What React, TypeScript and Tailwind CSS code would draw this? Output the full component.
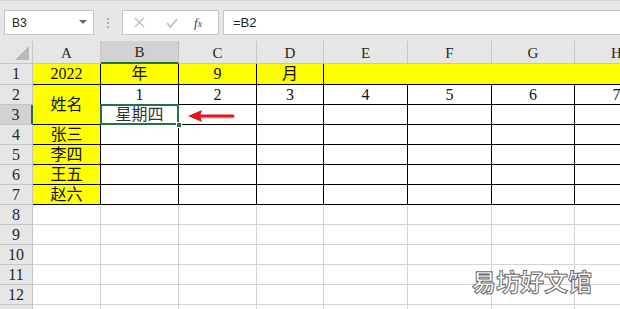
import React from "react";

const serif = { fontFamily: '"Liberation Serif", "Noto Sans CJK SC", serif' };

const cols = ["A", "B", "C", "D", "E", "F", "G", "H"];

function ColHeader({ l }: { l: string }) {
  if (l === "B") {
    return (
      <div className="flex items-center justify-center border-r border-[#bdbdbd] border-b-2 border-b-[#217346] bg-[#d2d2d2] text-[15px] text-[#262626] pt-[2px]">
        {l}
      </div>
    );
  }
  return (
    <div className="flex items-center justify-center border-r border-b border-[#c6c6c6] bg-[#e6e6e6] text-[15px] text-[#262626] pt-[2px]">
      {l}
    </div>
  );
}

function RowHeader({ n }: { n?: number }) {
  if (n === 3) {
    return (
      <div className="flex items-center justify-center border-b border-[#c6c6c6] border-r-2 border-r-[#217346] bg-[#d2d2d2] text-[16px] text-[#262626]">
        {n}
      </div>
    );
  }
  return (
    <div className="flex items-center justify-center border-r border-b border-[#c6c6c6] bg-[#e6e6e6] text-[16px] text-[#262626]">
      {n}
    </div>
  );
}

function Y({ children, className = "" }: { children?: React.ReactNode; className?: string }) {
  return (
    <div className={"flex items-center justify-center border-r border-b border-black bg-[#ffff00] text-[16px] text-[#111] " + className}>
      {children}
    </div>
  );
}

function W({ children }: { children?: React.ReactNode }) {
  return (
    <div className="flex items-center justify-center border-r border-b border-black bg-white text-[16px] text-[#111]">
      {children}
    </div>
  );
}

function L() {
  return <div className="border-r border-b border-[#d4d4d4] bg-white" />;
}

export default function App() {
  const names = ["张三", "李四", "王五", "赵六"];
  return (
    <div className="relative w-[620px] h-[309px] overflow-hidden bg-[#e6e6e6]">
      {/* toolbar */}
      <div className="h-[41px] border-t border-[#d4d4d4] bg-[#e6e6e6]">
        <div className="flex items-stretch h-[25px] mt-[9px]">
          <div
            className="ml-[4px] w-[90px] flex items-center justify-between border border-[#c6c6c6] bg-white pl-[7px] pr-[6px] text-[12px] text-[#222]"
            style={{ fontFamily: '"Liberation Sans", Arial, sans-serif' }}
          >
            <span>B3</span>
            <svg width="8" height="5" viewBox="0 0 8 5">
              <path d="M0 0 L8 0 L4 4 Z" fill="#6a6a6a" />
            </svg>
          </div>
          <div className="w-[28px] flex flex-col items-center justify-center gap-[2px]">
            <span className="w-[2px] h-[2px] bg-[#b0b0b0]" />
            <span className="w-[2px] h-[2px] bg-[#b0b0b0]" />
            <span className="w-[2px] h-[2px] bg-[#b0b0b0]" />
          </div>
          <div className="w-[97px] flex items-center border border-[#c6c6c6] bg-white">
            <svg className="ml-[11px]" width="11" height="11" viewBox="0 0 11 11">
              <path d="M1 1 L10 10 M10 1 L1 10" stroke="#bdbdbd" strokeWidth="1.3" />
            </svg>
            <svg className="ml-[21px]" width="12" height="10" viewBox="0 0 12 10">
              <path d="M1 5 L4.5 9 L11 1" stroke="#bdbdbd" strokeWidth="1.6" fill="none" />
            </svg>
            <span
              className="ml-[16px] text-[13px] italic text-[#444]"
              style={{ fontFamily: '"Liberation Serif", serif' }}
            >
              f<span className="text-[10px]">x</span>
            </span>
          </div>
          <div
            className="ml-[4px] flex-1 flex items-center border-y border-l border-[#c6c6c6] bg-white pl-[9px] text-[13px] text-[#222]"
            style={{ fontFamily: '"Liberation Sans", Arial, sans-serif' }}
          >
            =B2
          </div>
        </div>
      </div>

      {/* sheet */}
      <div
        className="grid w-max grid-cols-[33px_68px_78px_78px_67px_84px_84px_83px_84px] grid-rows-[23px_21px_repeat(12,20px)]"
        style={serif}
      >
        {/* header */}
        <div className="relative border-r border-b border-[#c6c6c6] bg-[#e6e6e6]">
          <svg className="absolute right-[3px] bottom-[3px]" width="14" height="14" viewBox="0 0 14 14">
            <path d="M14 0 L14 14 L0 14 Z" fill="#b9b9b9" />
          </svg>
        </div>
        {cols.map((c) => (
          <ColHeader key={c} l={c} />
        ))}

        {/* row 1 */}
        <RowHeader n={1} />
        <Y>2022</Y>
        <Y>年</Y>
        <Y>9</Y>
        <Y>月</Y>
        <Y className="col-span-4" />

        {/* row 2 */}
        <RowHeader n={2} />
        <Y className="row-span-2">姓名</Y>
        {[1, 2, 3, 4, 5, 6, 7].map((n) => (
          <W key={n}>{n}</W>
        ))}

        {/* row 3 */}
        <RowHeader n={3} />
        <div className="relative flex items-center justify-center border-r border-b border-black bg-white text-[16px] text-[#333]">
          星期四
          <div className="absolute left-[-1px] top-[-1px] right-[-1px] bottom-[-1px] border-2 border-[#217346]" />
          <div className="absolute right-[-4px] bottom-[-4px] w-[6px] h-[6px] bg-[#217346] border border-white" />
        </div>
        <W />
        <W />
        <W />
        <W />
        <W />
        <W />

        {/* rows 4-7 */}
        {names.map((nm, i) => (
          <React.Fragment key={nm}>
            <RowHeader n={i + 4} />
            <Y>{nm}</Y>
            <W />
            <W />
            <W />
            <W />
            <W />
            <W />
            <W />
          </React.Fragment>
        ))}

        {/* rows 8-13 */}
        {[8, 9, 10, 11, 12, 0].map((n) => (
          <React.Fragment key={n}>
            <RowHeader n={n === 0 ? undefined : n} />
            <L />
            <L />
            <L />
            <L />
            <L />
            <L />
            <L />
            <L />
          </React.Fragment>
        ))}
      </div>

      {/* red arrow */}
      <svg className="absolute left-[184px] top-[108px]" width="54" height="18" viewBox="0 0 54 18">
        <path d="M16 9.5 L50 9.5" stroke="#b0b0b0" strokeWidth="3" opacity="0.5" />
        <path d="M15 8 L49 8" stroke="#e3161b" strokeWidth="3" strokeLinecap="round" />
        <path d="M4 8 L18 2 L16 8 L18 14 Z" fill="#e3161b" />
      </svg>

      {/* watermark */}
      <div
        className="absolute left-[472px] top-[263px] text-[24px] font-bold text-white [-webkit-text-stroke:1px_#6b6b6b]"
        style={{ fontFamily: '"Noto Sans CJK SC", sans-serif' }}
      >
        易坊好文馆
      </div>
    </div>
  );
}
